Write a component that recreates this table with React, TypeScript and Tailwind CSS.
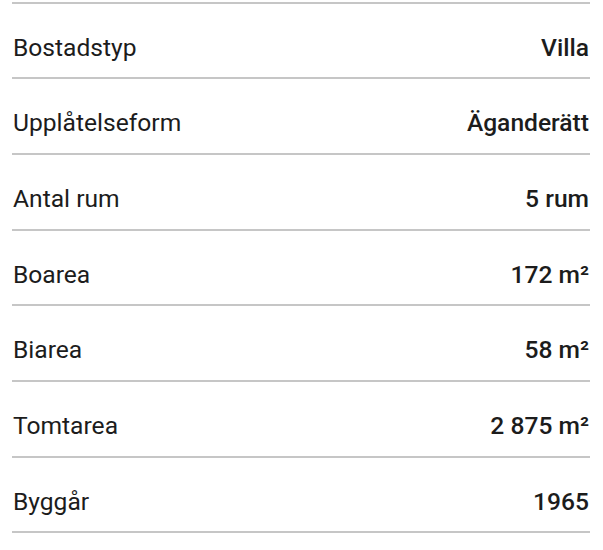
const rows: [string, string][] = [
  ["Bostadstyp", "Villa"],
  ["Upplåtelseform", "Äganderätt"],
  ["Antal rum", "5 rum"],
  ["Boarea", "172 m²"],
  ["Biarea", "58 m²"],
  ["Tomtarea", "2 875 m²"],
  ["Byggår", "1965"],
];

export default function App() {
  return (
    <div
      className="w-[603px] h-[550px] bg-white pt-[1.5px]"
      style={{ fontFamily: "Roboto, 'Noto Sans', sans-serif" }}
    >
      <div className="mx-[12px] w-[578px] border-t-[2px] border-[#c6c6c6]">
        {rows.map(([k, v]) => (
          <div
            key={k}
            className="flex justify-between h-[75.7px] border-b-[2px] border-[#c6c6c6] pt-[30px] px-[1px] text-[24.6px] leading-[28px] text-[#1c1c1c]"
          >
            <span>{k}</span>
            <span className="font-medium">{v}</span>
          </div>
        ))}
      </div>
    </div>
  );
}
